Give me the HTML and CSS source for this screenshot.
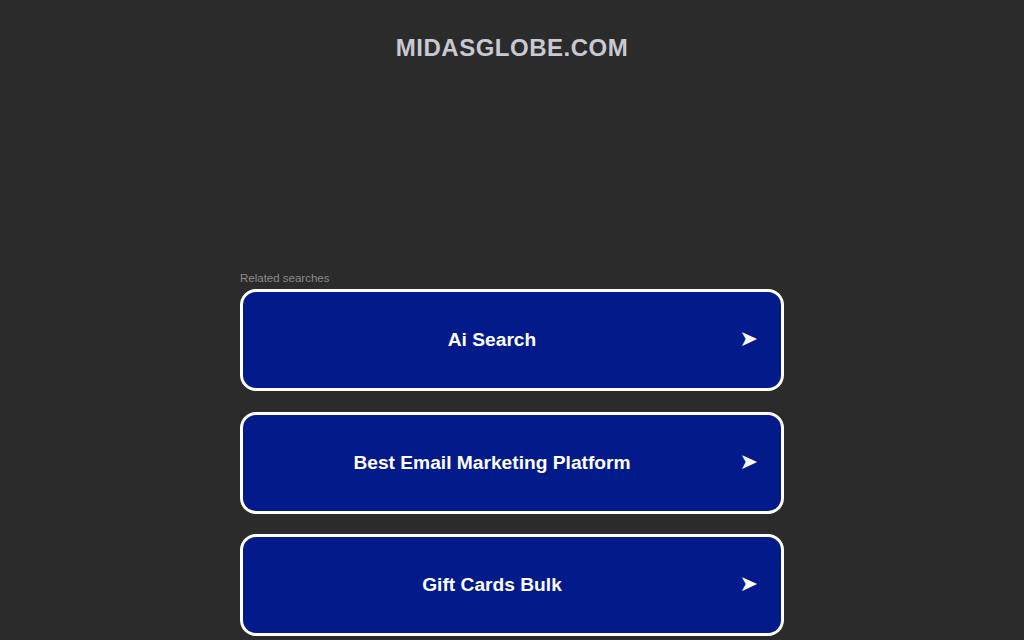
FILE: index.html
```html
<!DOCTYPE html>
<html>
<head>
<meta charset="utf-8">
<link rel="stylesheet" href="styles.css">
</head>
<body>
<div class="page">
  <h1 class="domain">MIDASGLOBE.COM</h1>
  <div class="results">
    <div class="label">Related searches</div>
    <a class="card" href="#"><span class="text">Ai Search</span><span class="arrow">➤</span></a>
    <a class="card" href="#"><span class="text">Best Email Marketing Platform</span><span class="arrow">➤</span></a>
    <a class="card" href="#"><span class="text">Gift Cards Bulk</span><span class="arrow">➤</span></a>
  </div>
</div>
</body>
</html>
```
FILE: styles.css
```css
html, body {
  margin: 0;
  padding: 0;
  background: #2b2b2b;
  font-family: "Liberation Sans", Arial, sans-serif;
  overflow: hidden;
}
.page {
  display: flex;
  flex-direction: column;
  align-items: center;
}
.domain {
  margin: 34px 0 0 0;
  font-size: 24px;
  line-height: 28px;
  font-weight: bold;
  color: #c9c9d1;
  letter-spacing: 0.5px;
}
.results {
  width: 544px;
  margin-top: 210px;
  display: flex;
  flex-direction: column;
}
.label {
  font-size: 11.5px;
  line-height: 13px;
  color: #8a8a8a;
  margin-bottom: 4px;
}
.card {
  position: relative;
  box-sizing: border-box;
  height: 102px;
  margin-bottom: 20.5px;
  padding-right: 40px;
  border: 3px solid #ffffff;
  border-radius: 16px;
  background: #021a8a;
  display: flex;
  align-items: center;
  justify-content: center;
  text-decoration: none;
  color: #ffffff;
}
.text {
  font-size: 19.2px;
  font-weight: bold;
}
.arrow {
  position: absolute;
  right: 23px;
  top: 50%;
  transform: translateY(-55%);
  font-size: 22px;
  font-family: "DejaVu Sans", sans-serif;
}
```
